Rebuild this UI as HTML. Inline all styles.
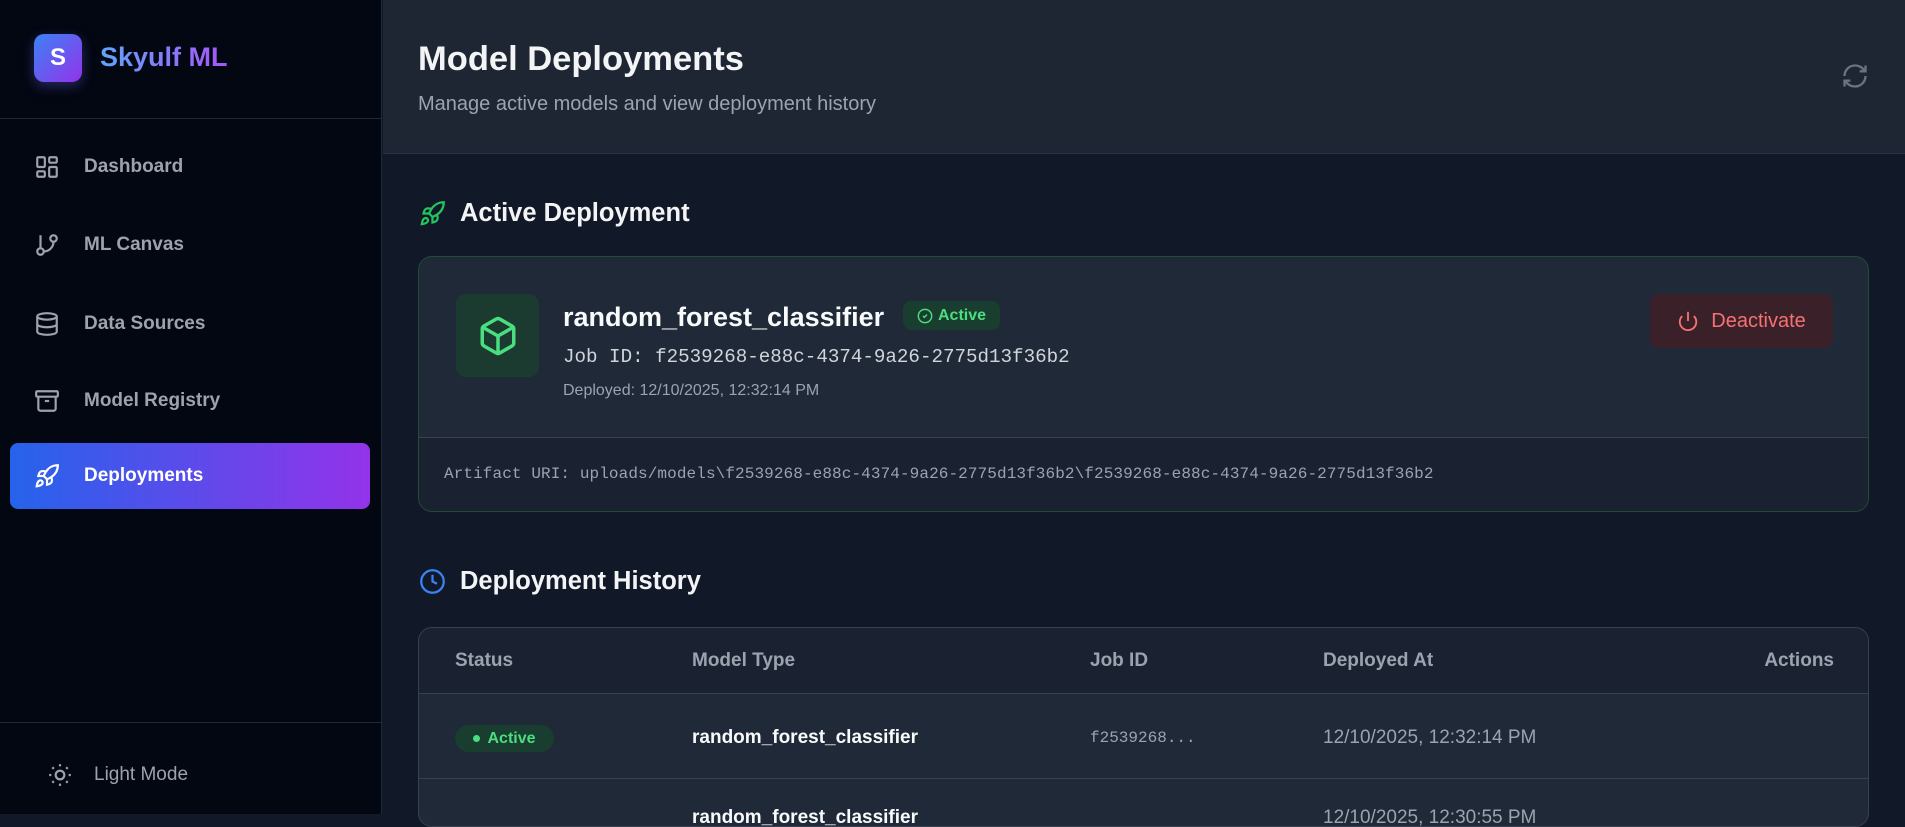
<!DOCTYPE html>
<html><head><meta charset="utf-8"><style>
*{box-sizing:border-box;margin:0;padding:0}
body{width:1905px;height:814px;overflow:hidden;background:#111827;font-family:"Liberation Sans",sans-serif;position:relative}
.abs{position:absolute}
.side{left:0;top:0;width:382px;height:814px;background:#030712;border-right:1px solid #1f2937}
.nav{position:absolute;left:10px;width:360px;height:66px;display:flex;align-items:center;color:#9ca3af;font-size:19px;font-weight:bold}
.nav svg{margin-left:24px;margin-right:24px}
.mono{font-family:"Liberation Mono",monospace}
</style></head><body>
<div class="abs side">
  <div class="abs" style="left:34px;top:34px;width:48px;height:48px;border-radius:10px;background:linear-gradient(135deg,#3b82f6,#9333ea);color:#fff;font-weight:bold;font-size:24px;display:flex;align-items:center;justify-content:center;box-shadow:0 4px 12px rgba(99,102,241,.35)">S</div>
  <div class="abs" style="left:100px;top:42px;font-size:27px;font-weight:bold;background:linear-gradient(90deg,#60a5fa,#a855f7);-webkit-background-clip:text;color:transparent">Skyulf ML</div>
  <div class="abs" style="left:0;top:118px;width:382px;border-top:1px solid #1f2937"></div>
  <div class="nav" style="top:134px"><svg width="26" height="26" viewBox="0 0 24 24" fill="none" stroke="#9ca3af" stroke-width="2"><rect x="3" y="3" width="7" height="9" rx="1"/><rect x="14" y="3" width="7" height="5" rx="1"/><rect x="14" y="12" width="7" height="9" rx="1"/><rect x="3" y="16" width="7" height="5" rx="1"/></svg>Dashboard</div>
  <div class="nav" style="top:212px"><svg width="26" height="26" viewBox="0 0 24 24" fill="none" stroke="#9ca3af" stroke-width="2"><line x1="6" y1="3" x2="6" y2="15"/><circle cx="18" cy="6" r="3"/><circle cx="6" cy="18" r="3"/><path d="M18 9a9 9 0 0 1-9 9"/></svg>ML Canvas</div>
  <div class="nav" style="top:291px"><svg width="26" height="26" viewBox="0 0 24 24" fill="none" stroke="#9ca3af" stroke-width="2"><ellipse cx="12" cy="5" rx="9" ry="3"/><path d="M3 5v14c0 1.7 4 3 9 3s9-1.3 9-3V5"/><path d="M3 12c0 1.7 4 3 9 3s9-1.3 9-3"/></svg>Data Sources</div>
  <div class="nav" style="top:368px"><svg width="26" height="26" viewBox="0 0 24 24" fill="none" stroke="#9ca3af" stroke-width="2"><rect x="2" y="3" width="20" height="5" rx="1"/><path d="M4 8v11a2 2 0 0 0 2 2h12a2 2 0 0 0 2-2V8"/><path d="M10 12h4"/></svg>Model Registry</div>
  <div class="nav" style="top:443px;border-radius:8px;background:linear-gradient(90deg,#2563eb,#9333ea);color:#fff"><svg width="26" height="26" viewBox="0 0 24 24" fill="none" stroke="#fff" stroke-width="2"><path d="M4.5 16.5c-1.5 1.3-2 5-2 5s3.7-.5 5-2c.7-.8.7-2.1-.1-2.9a2.2 2.2 0 0 0-2.9-.1z"/><path d="m12 15-3-3a22 22 0 0 1 2-3.9A12.9 12.9 0 0 1 22 2c0 2.7-.8 7.5-6 11a22.4 22.4 0 0 1-4 2z"/><path d="M9 12H4s.6-3 2-4c1.6-1.1 5 0 5 0"/><path d="M12 15v5s3-.6 4-2c1.1-1.6 0-5 0-5"/></svg>Deployments</div>
  <div class="abs" style="left:0;top:722px;width:382px;border-top:1px solid #1f2937"></div>
  <div class="abs" style="left:47px;top:762px;display:flex;align-items:center;color:#9ca3af;font-size:19px"><svg width="26" height="26" viewBox="0 0 24 24" fill="none" stroke="#9ca3af" stroke-width="2" style="margin-right:21px"><circle cx="12" cy="12" r="4"/><path d="M12 2v2M12 20v2M4.9 4.9l1.4 1.4M17.7 17.7l1.4 1.4M2 12h2M20 12h2M6.3 17.7l-1.4 1.4M19.1 4.9l-1.4 1.4"/></svg>Light Mode</div>
</div>

<div class="abs" style="left:383px;top:0;width:1522px;height:154px;background:#1e2634;border-bottom:1px solid #2b3444"></div>
<div class="abs" style="left:418px;top:40px;font-size:34.5px;font-weight:bold;color:#f3f4f6">Model Deployments</div>
<div class="abs" style="left:418px;top:93px;font-size:20px;color:#9ca3af">Manage active models and view deployment history</div>
<svg class="abs" style="left:1841px;top:62px" width="28" height="28" viewBox="0 0 24 24" fill="none" stroke="#6b7280" stroke-width="2"><path d="M3 12a9 9 0 0 1 9-9 9.75 9.75 0 0 1 6.74 2.74L21 8"/><path d="M21 3v5h-5"/><path d="M21 12a9 9 0 0 1-9 9 9.75 9.75 0 0 1-6.74-2.74L3 16"/><path d="M8 16H3v5"/></svg>

<svg class="abs" style="left:419px;top:200px" width="27" height="27" viewBox="0 0 24 24" fill="none" stroke="#22c55e" stroke-width="2"><path d="M4.5 16.5c-1.5 1.3-2 5-2 5s3.7-.5 5-2c.7-.8.7-2.1-.1-2.9a2.2 2.2 0 0 0-2.9-.1z"/><path d="m12 15-3-3a22 22 0 0 1 2-3.9A12.9 12.9 0 0 1 22 2c0 2.7-.8 7.5-6 11a22.4 22.4 0 0 1-4 2z"/><path d="M9 12H4s.6-3 2-4c1.6-1.1 5 0 5 0"/><path d="M12 15v5s3-.6 4-2c1.1-1.6 0-5 0-5"/></svg>
<div class="abs" style="left:460px;top:199px;font-size:25.5px;font-weight:bold;color:#f3f4f6">Active Deployment</div>

<div class="abs" style="left:418px;top:256px;width:1451px;height:256px;border:1px solid #1f4d36;border-radius:14px;background:#1f2937;overflow:hidden">
  <div class="abs" style="left:37px;top:37px;width:83px;height:83px;border-radius:10px;background:#1b3b31;display:flex;align-items:center;justify-content:center"><svg width="42" height="42" viewBox="0 0 24 24" fill="none" stroke="#4ade80" stroke-width="2"><path d="M21 8a2 2 0 0 0-1-1.7l-7-4a2 2 0 0 0-2 0l-7 4A2 2 0 0 0 3 8v8a2 2 0 0 0 1 1.7l7 4a2 2 0 0 0 2 0l7-4a2 2 0 0 0 1-1.7Z"/><path d="m3.3 7 8.7 5 8.7-5"/><path d="M12 22V12"/></svg></div>
  <div class="abs" style="left:144px;top:45px;font-size:27px;font-weight:bold;color:#f9fafb">random_forest_classifier</div>
  <div class="abs" style="left:484px;top:44px;width:97px;height:29px;border-radius:8px;background:#193d2e;color:#4ade80;font-size:16px;font-weight:bold;display:flex;align-items:center;justify-content:center"><svg width="16" height="16" viewBox="0 0 24 24" fill="none" stroke="#4ade80" stroke-width="2.2" style="margin-right:5px"><circle cx="12" cy="12" r="10"/><path d="m9 12 2 2 4-4"/></svg>Active</div>
  <div class="abs mono" style="left:144px;top:89px;font-size:19.2px;color:#d1d5db">Job ID: f2539268-e88c-4374-9a26-2775d13f36b2</div>
  <div class="abs" style="left:144px;top:125px;font-size:16px;color:#9ca3af">Deployed: 12/10/2025, 12:32:14 PM</div>
  <div class="abs" style="left:1231px;top:37px;width:183px;height:54px;border-radius:9px;background:#3a2129;color:#f87171;font-size:20px;display:flex;align-items:center;justify-content:center"><svg width="22" height="22" viewBox="0 0 24 24" fill="none" stroke="#f87171" stroke-width="2" style="margin-right:12px"><path d="M12 2v10"/><path d="M18.4 6.6a9 9 0 1 1-12.77.04"/></svg>Deactivate</div>
  <div class="abs" style="left:0;top:180px;width:1451px;height:76px;background:#1a2130;border-top:1px solid #374151"></div>
  <div class="abs mono" style="left:25px;top:208px;font-size:16px;letter-spacing:0.1px;color:#9ca3af">Artifact URI: uploads/models\f2539268-e88c-4374-9a26-2775d13f36b2\f2539268-e88c-4374-9a26-2775d13f36b2</div>
</div>

<svg class="abs" style="left:419px;top:568px" width="27" height="27" viewBox="0 0 24 24" fill="none" stroke="#3b82f6" stroke-width="2"><circle cx="12" cy="12" r="10"/><path d="M12 6v6l4 2"/></svg>
<div class="abs" style="left:460px;top:567px;font-size:25.5px;font-weight:bold;color:#f3f4f6">Deployment History</div>

<div class="abs" style="left:418px;top:627px;width:1451px;height:200px;border:1px solid #374151;border-radius:14px;background:#1f2937;overflow:hidden">
  <div class="abs" style="left:0;top:0;width:1451px;height:66px;background:#1a2130;border-bottom:1px solid #374151;color:#9ca3af;font-size:19px;font-weight:bold">
    <div class="abs" style="left:36px;top:22px">Status</div>
    <div class="abs" style="left:273px;top:22px">Model Type</div>
    <div class="abs" style="left:671px;top:22px">Job ID</div>
    <div class="abs" style="left:904px;top:22px">Deployed At</div>
    <div class="abs" style="right:36px;top:22px">Actions</div>
  </div>
  <div class="abs" style="left:36px;top:97px;width:99px;height:27px;border-radius:14px;background:#193d2e;color:#4ade80;font-size:16px;font-weight:bold;display:flex;align-items:center;justify-content:center"><span style="width:7px;height:7px;border-radius:4px;background:#4ade80;margin-right:7px"></span>Active</div>
  <div class="abs" style="left:273px;top:99px;font-size:19px;font-weight:bold;color:#f9fafb">random_forest_classifier</div>
  <div class="abs mono" style="left:671px;top:101px;font-size:16px;color:#9ca3af">f2539268...</div>
  <div class="abs" style="left:904px;top:99px;font-size:19px;color:#9ca3af">12/10/2025, 12:32:14 PM</div>
  <div class="abs" style="left:0;top:150px;width:1451px;border-top:1px solid #374151"></div>
  <div class="abs" style="left:273px;top:179px;font-size:19px;font-weight:bold;color:#f9fafb">random_forest_classifier</div>
  <div class="abs" style="left:904px;top:179px;font-size:19px;color:#9ca3af">12/10/2025, 12:30:55 PM</div>
</div>
</body></html>
